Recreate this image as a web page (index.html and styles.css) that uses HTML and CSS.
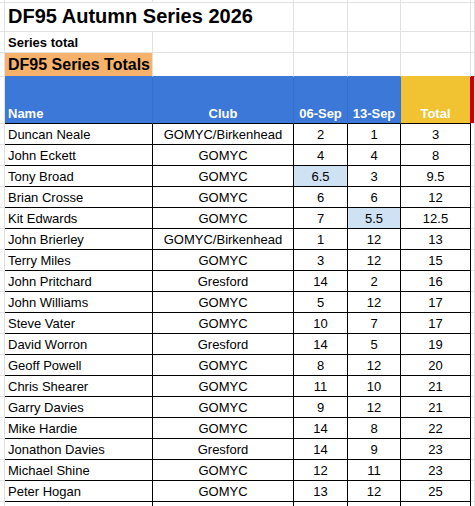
FILE: index.html
```html
<!DOCTYPE html>
<html lang="en">
<head>
    <meta charset="UTF-8">
    <meta name="viewport" content="width=device-width, initial-scale=1.0">
    <title>DF95 Autumn Series 2026</title>
    <link rel="stylesheet" href="styles.css">
</head>
<body>
<table class="bang">
    <colgroup>
        <col class="c-stub">
        <col class="c-name">
        <col class="c-club">
        <col class="c-race">
        <col class="c-race2">
        <col class="c-total">
        <col class="c-extra">
    </colgroup>
    <tr class="dong-dau">
        <td class="stub"></td><td></td><td></td><td></td><td></td><td></td><td></td>
    </tr>
    <tr class="dong-tieu-de">
        <td class="stub"></td>
        <td colspan="2" class="tieu-de">DF95 Autumn Series 2026</td>
        <td></td><td></td><td></td><td></td>
    </tr>
    <tr class="dong-phu">
        <td class="stub"></td>
        <td class="phu-de">Series total</td>
        <td></td><td></td><td></td><td></td><td></td>
    </tr>
    <tr class="dong-cam">
        <td class="stub"></td>
        <td class="o-cam">DF95 Series Totals</td>
        <td class="duoi-xanh"></td><td class="duoi-xanh"></td><td class="duoi-xanh"></td><td class="duoi-vang"></td><td class="duoi-do"></td>
    </tr>
    <tr class="dong-header">
        <td class="stub"></td>
        <td class="h-xanh trai">Name</td>
        <td class="h-xanh">Club</td>
        <td class="h-xanh">06-Sep</td>
        <td class="h-xanh">13-Sep</td>
        <td class="h-vang">Total</td>
        <td class="h-do"></td>
    </tr>
    <tr class="dong"><td class="stub"></td><td class="ten">Duncan Neale</td><td>GOMYC/Birkenhead</td><td>2</td><td>1</td><td>3</td><td class="ngoai"></td></tr>
    <tr class="dong"><td class="stub"></td><td class="ten">John Eckett</td><td>GOMYC</td><td>4</td><td>4</td><td>8</td><td class="ngoai"></td></tr>
    <tr class="dong"><td class="stub"></td><td class="ten">Tony Broad</td><td>GOMYC</td><td class="noi-bat">6.5</td><td>3</td><td>9.5</td><td class="ngoai"></td></tr>
    <tr class="dong"><td class="stub"></td><td class="ten">Brian Crosse</td><td>GOMYC</td><td>6</td><td>6</td><td>12</td><td class="ngoai"></td></tr>
    <tr class="dong"><td class="stub"></td><td class="ten">Kit Edwards</td><td>GOMYC</td><td>7</td><td class="noi-bat">5.5</td><td>12.5</td><td class="ngoai"></td></tr>
    <tr class="dong"><td class="stub"></td><td class="ten">John Brierley</td><td>GOMYC/Birkenhead</td><td>1</td><td>12</td><td>13</td><td class="ngoai"></td></tr>
    <tr class="dong"><td class="stub"></td><td class="ten">Terry Miles</td><td>GOMYC</td><td>3</td><td>12</td><td>15</td><td class="ngoai"></td></tr>
    <tr class="dong"><td class="stub"></td><td class="ten">John Pritchard</td><td>Gresford</td><td>14</td><td>2</td><td>16</td><td class="ngoai"></td></tr>
    <tr class="dong"><td class="stub"></td><td class="ten">John Williams</td><td>GOMYC</td><td>5</td><td>12</td><td>17</td><td class="ngoai"></td></tr>
    <tr class="dong"><td class="stub"></td><td class="ten">Steve Vater</td><td>GOMYC</td><td>10</td><td>7</td><td>17</td><td class="ngoai"></td></tr>
    <tr class="dong"><td class="stub"></td><td class="ten">David Worron</td><td>Gresford</td><td>14</td><td>5</td><td>19</td><td class="ngoai"></td></tr>
    <tr class="dong"><td class="stub"></td><td class="ten">Geoff Powell</td><td>GOMYC</td><td>8</td><td>12</td><td>20</td><td class="ngoai"></td></tr>
    <tr class="dong"><td class="stub"></td><td class="ten">Chris Shearer</td><td>GOMYC</td><td>11</td><td>10</td><td>21</td><td class="ngoai"></td></tr>
    <tr class="dong"><td class="stub"></td><td class="ten">Garry Davies</td><td>GOMYC</td><td>9</td><td>12</td><td>21</td><td class="ngoai"></td></tr>
    <tr class="dong"><td class="stub"></td><td class="ten">Mike Hardie</td><td>GOMYC</td><td>14</td><td>8</td><td>22</td><td class="ngoai"></td></tr>
    <tr class="dong"><td class="stub"></td><td class="ten">Jonathon Davies</td><td>Gresford</td><td>14</td><td>9</td><td>23</td><td class="ngoai"></td></tr>
    <tr class="dong"><td class="stub"></td><td class="ten">Michael Shine</td><td>GOMYC</td><td>12</td><td>11</td><td>23</td><td class="ngoai"></td></tr>
    <tr class="dong"><td class="stub"></td><td class="ten">Peter Hogan</td><td>GOMYC</td><td>13</td><td>12</td><td>25</td><td class="ngoai"></td></tr>
    <tr class="dong-trong">
        <td class="stub"></td><td></td><td></td><td></td><td></td><td></td><td></td>
    </tr>
</table>
</body>
</html>
```

FILE: styles.css
```css
html, body {
    margin: 0;
    overflow: hidden;
    background-color: white;
}

body {
    font-family: "Liberation Sans", Arial, sans-serif;
    font-size: 13px;
    color: black;
}

.bang {
    border-collapse: separate;
    border-spacing: 0;
    table-layout: fixed;
    width: 475px;
}

.c-stub { width: 5px; }
.c-name { width: 148px; }
.c-club { width: 141px; }
.c-race { width: 54px; }
.c-race2 { width: 53px; }
.c-total { width: 70px; }
.c-extra { width: 4px; }

.bang td {
    box-sizing: border-box;
    padding: 0 3px 2px 3px;
    border-right: 1px solid #e2e2e2;
    border-bottom: 1px solid #e2e2e2;
    vertical-align: bottom;
    white-space: nowrap;
    overflow: hidden;
    line-height: 15px;
    text-align: center;
}

.bang td.stub,
.bang td:last-child {
    padding: 0;
}

.dong-dau { height: 3px; }
.dong-dau td { padding: 0; line-height: 0; }

.dong-tieu-de { height: 29px; }
.dong-phu { height: 21px; }
.dong-cam { height: 24px; }
.dong-header { height: 47px; }
.dong { height: 21px; }
.dong-trong { height: 21px; }

.tieu-de {
    font-size: 20px;
    font-weight: bold;
    text-align: left !important;
    line-height: 23px !important;
    padding-bottom: 3px !important;
}

.phu-de {
    font-weight: bold;
    text-align: left !important;
}

.o-cam {
    background-color: #f6b26b;
    font-size: 16px;
    font-weight: bold;
    text-align: left !important;
    line-height: 19px !important;
    padding-bottom: 2px !important;
    border-bottom-color: #3c78d8 !important;
}

.duoi-xanh { border-bottom-color: #3c78d8 !important; }
.duoi-vang { border-bottom-color: #f1c232 !important; }
.duoi-do { border-bottom-color: #cc0000 !important; }

.h-xanh {
    background-color: #3c78d8;
    color: white;
    font-weight: bold;
    border-right-color: #3670cf !important;
    border-bottom-color: black !important;
}

.h-vang {
    background-color: #f1c232;
    color: white;
    font-weight: bold;
    border-right-color: #cc0000 !important;
    border-bottom-color: black !important;
}

.h-do {
    background-color: #cc0000;
}

.trai {
    text-align: left !important;
}

.dong td {
    border-right-color: black;
    border-bottom-color: black;
}

.dong td.stub {
    border-right-color: #e2e2e2;
    border-bottom-color: #e2e2e2;
}

.dong td.ngoai {
    border-right-color: #e2e2e2;
    border-bottom-color: #e2e2e2;
}

.dong-trong td {
    border-right-color: black;
}

.dong-trong td.stub,
.dong-trong td:last-child {
    border-right-color: #e2e2e2;
}

.ten {
    text-align: left !important;
}

.noi-bat {
    background-color: #cfe2f3;
}
```
